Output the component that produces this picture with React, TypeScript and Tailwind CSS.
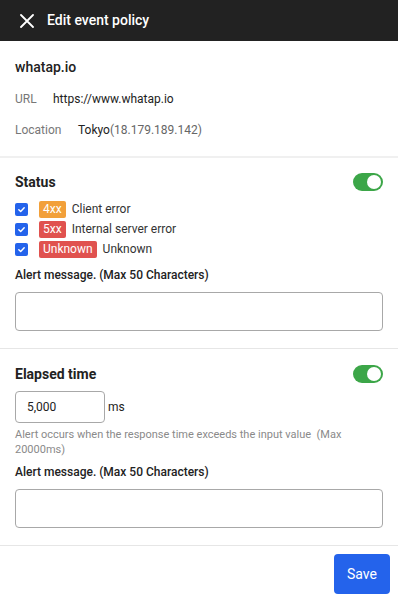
function Toggle() {
  return (
    <div className="flex h-[18px] w-[30px] items-center justify-end rounded-full bg-[#3ca648] px-[2px]">
      <div className="h-[14px] w-[14px] rounded-full bg-white" />
    </div>
  )
}

function Check() {
  return (
    <div className="flex h-[13px] w-[13px] items-center justify-center rounded-[2px] bg-[#2463eb]">
      <svg width="9" height="9" viewBox="0 0 10 10" fill="none">
        <path d="M2 5.2 4.1 7.2 8 3" stroke="white" strokeWidth="1.6" strokeLinecap="round" strokeLinejoin="round" />
      </svg>
    </div>
  )
}

function StatusRow({ badge, color, label }: { badge: string; color: string; label: string }) {
  return (
    <div className="flex h-[20px] items-center">
      <Check />
      <span className={`ml-[11px] rounded-[2px] px-[4px] text-[12px] leading-[17px] text-white ${color}`}>{badge}</span>
      <span className="ml-[6px] text-[12px] text-[#333]">{label}</span>
    </div>
  )
}

export default function App() {
  return (
    <div className="h-[608px] w-[398px] bg-white font-['Roboto',sans-serif] text-[#222]">
      <div className="flex h-[41px] items-center bg-[#222] px-[20px] text-white">
        <svg width="14" height="14" viewBox="0 0 14 14" fill="none">
          <path d="M1 1 13 13M13 1 1 13" stroke="white" strokeWidth="1.8" strokeLinecap="round" />
        </svg>
        <span className="ml-[13px] text-[14px] font-medium">Edit event policy</span>
      </div>

      <div className="px-[15px] pb-[16px] pt-[16px]">
        <div className="text-[14px] font-medium leading-[20px]">whatap.io</div>
        <div className="mt-[12px] flex text-[12px] leading-[20px]">
          <span className="w-[38px] text-[#777]">URL</span>
          <span className="text-[#222]">https://www.whatap.io</span>
        </div>
        <div className="mt-[11px] flex text-[12px] leading-[20px]">
          <span className="w-[63px] text-[#777]">Location</span>
          <span className="text-[#222]">Tokyo</span>
          <span className="text-[#666]">(18.179.189.142)</span>
        </div>
      </div>

      <div className="h-[2px] bg-[#f0f0f0]" />

      <div className="px-[15px] pb-[17px] pt-[14px]">
        <div className="flex h-[20px] items-center justify-between">
          <span className="text-[14px] font-bold">Status</span>
          <Toggle />
        </div>
        <div className="mt-[7px] flex flex-col">
          <StatusRow badge="4xx" color="bg-[#f2a03a]" label="Client error" />
          <StatusRow badge="5xx" color="bg-[#e0524f]" label="Internal server error" />
          <StatusRow badge="Unknown" color="bg-[#e0524f]" label="Unknown" />
        </div>
        <div className="mt-[6px] text-[12px] font-medium leading-[20px]">Alert message. (Max 50 Characters)</div>
        <input className="mt-[7px] block h-[39px] w-full rounded-[4px] border border-[#a8a8a8] px-[10px] text-[12px] outline-none" />
      </div>

      <div className="h-px bg-[#e6e6e6]" />

      <div className="px-[15px] pb-[17px] pt-[15px]">
        <div className="flex h-[20px] items-center justify-between">
          <span className="text-[14px] font-bold">Elapsed time</span>
          <Toggle />
        </div>
        <div className="mt-[7px] flex items-center">
          <input
            defaultValue="5,000"
            className="block h-[32px] w-[90px] rounded-[4px] border border-[#a8a8a8] px-[11px] text-[12px] text-[#222] outline-none"
          />
          <span className="ml-[3px] text-[12px]">ms</span>
        </div>
        <p className="mt-[4px] text-[11px] leading-[15px] text-[#8a8a8a]">
          Alert occurs when the response time exceeds the input value&nbsp; (Max
          <br />
          20000ms)
        </p>
        <div className="mt-[5px] text-[12px] font-medium leading-[20px]">Alert message. (Max 50 Characters)</div>
        <input className="mt-[7px] block h-[39px] w-full rounded-[4px] border border-[#a8a8a8] px-[10px] text-[12px] outline-none" />
      </div>

      <div className="h-px bg-[#e6e6e6]" />

      <div className="flex justify-end pr-[8px] pt-[8px]">
        <button className="h-[40px] w-[56px] rounded-[4px] bg-[#2463eb] text-[14px] text-white">Save</button>
      </div>
    </div>
  )
}
